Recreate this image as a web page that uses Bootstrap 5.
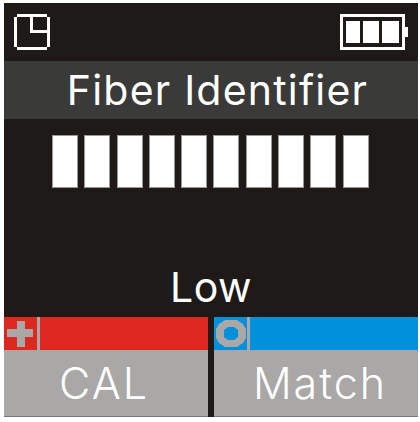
<!DOCTYPE html>
<html lang="en">
<head>
    <meta charset="UTF-8">
    <title>Fiber Identifier</title>
    <link href="https://cdn.jsdelivr.net/npm/bootstrap@5.3.0/dist/css/bootstrap.min.css" rel="stylesheet">
    <style>
        html, body { height: 422px; overflow: hidden; }
        body { background: #fff; font-family: "Inter", "Liberation Sans", sans-serif; font-weight: 400; }
        .screen { width: 414px; height: 414px; margin: 3px 0 0 4px; background: #1e1a18; color: #fff; }
        .topbar { height: 58px; padding: 11px 10px 0; }
        .title-row { height: 58px; padding-left: 13px; background: #3a3a38; font-size: 41px; line-height: 58px; letter-spacing: 1.2px; }
        .bars { height: 53px; margin-top: 16px; padding-left: 48px; gap: 6.3px; }
        .bar-cell { width: 26px; background: #fff; border: 1px solid #999; }
        .level { height: 129px; font-size: 41px; line-height: 1; padding-bottom: 9px; letter-spacing: .5px; }
        .softkeys { gap: 6px; }
        .softkey { width: 204px; }
        .softkey-head { height: 33px; }
        .softkey-head.red { background: #dc281e; }
        .softkey-head.blue { background: #0090dc; }
        .softkey-icon { width: 36px; height: 33px; border-right: 3px solid #a9a8a6; display: block; }
        .softkey-label { height: 67px; background: #a9a8a6; border-bottom: 1px solid #777; font-size: 43px; font-weight: 300; line-height: 66px; letter-spacing: 2px; }
    </style>
    <script src="https://cdn.jsdelivr.net/npm/bootstrap@5.3.0/dist/js/bootstrap.bundle.min.js"></script>
</head>
<body>
    <div class="screen d-flex flex-column">
        <div class="topbar d-flex justify-content-between align-items-start">
            <svg width="36" height="36" viewBox="0 0 36 36" fill="#fff">
                <rect x="3" y="0" width="30" height="3"/>
                <rect x="3" y="33" width="30" height="3"/>
                <rect x="0" y="3" width="3" height="30"/>
                <rect x="33" y="3" width="3" height="30"/>
                <rect x="16" y="3" width="3" height="16"/>
                <rect x="16" y="16" width="17" height="3"/>
            </svg>
            <svg width="68" height="36" viewBox="0 0 68 36">
                <rect x="1.5" y="1.5" width="62" height="33" fill="#1e1a18" stroke="#fff" stroke-width="3"/>
                <rect x="6" y="7" width="14" height="22" fill="#fff"/>
                <rect x="23" y="7" width="16" height="22" fill="#fff"/>
                <rect x="42" y="7" width="17" height="22" fill="#fff"/>
                <rect x="65" y="13" width="3" height="10" fill="#fff"/>
            </svg>
        </div>
        <div class="title-row text-center">Fiber Identifier</div>
        <div class="bars d-flex">
            <div class="bar-cell"></div><div class="bar-cell"></div><div class="bar-cell"></div><div class="bar-cell"></div><div class="bar-cell"></div>
            <div class="bar-cell"></div><div class="bar-cell"></div><div class="bar-cell"></div><div class="bar-cell"></div><div class="bar-cell"></div>
        </div>
        <div class="level d-flex align-items-end justify-content-center">Low</div>
        <div class="softkeys d-flex">
            <div class="softkey">
                <div class="softkey-head red">
                    <svg class="softkey-icon" viewBox="0 0 33 33" width="36" height="33">
                        <path d="M13 4h8v8h8v8h-8v10h-8V20H3v-8h10z" fill="#a9a8a6"/>
                    </svg>
                </div>
                <div class="softkey-label text-center pe-1">CAL</div>
            </div>
            <div class="softkey">
                <div class="softkey-head blue">
                    <svg class="softkey-icon" viewBox="0 0 33 33" width="36" height="33">
                        <path fill-rule="evenodd" d="M11 3h12l6 4 3 5v9l-3 5-6 4H11l-6-4-3-5v-9l3-5zM14 10l-4 3v7l4 3h6l4-3v-7l-4-3z" fill="#a9a8a6"/>
                    </svg>
                </div>
                <div class="softkey-label text-center ps-2">Match</div>
            </div>
        </div>
    </div>
</body>
</html>
